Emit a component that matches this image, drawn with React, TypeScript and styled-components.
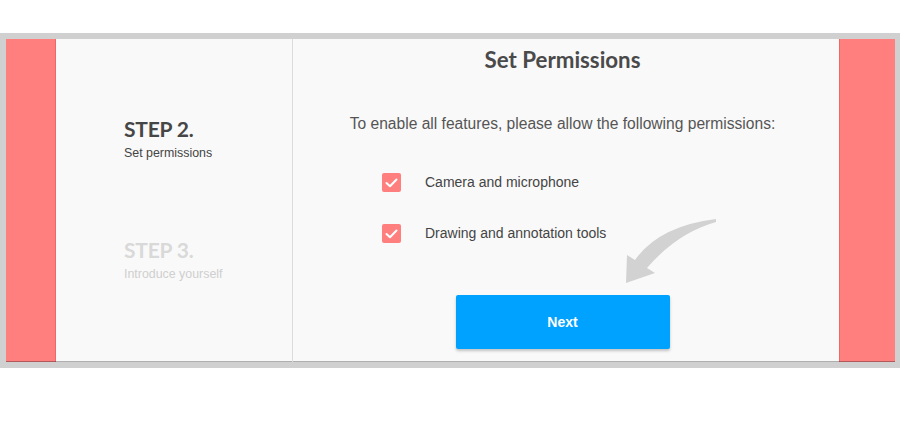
import * as React from "react"
import styled, {createGlobalStyle} from "styled-components"

const GlobalStyle = createGlobalStyle`
  html, body {
    margin: 0;
    padding: 0;
    background: #ffffff;
  }
  body {
    font-family: "Liberation Sans", Arial, sans-serif;
  }
`

const Page = styled.div`
  padding-top: 33px;
  width: 900px;
`

const Frame = styled.div`
  background: #d0d0d0;
  padding: 6px 5px 6px 6px;
`

const Inner = styled.div`
  display: flex;
  height: 323px;
`

const Edge = styled.div<{ $w: number; $side: "left" | "right" }>`
  width: ${p => p.$w}px;
  flex-shrink: 0;
  background: #ff7f7f;
  box-shadow: inset 0 -1px 0 rgba(0, 0, 0, 0.3),
    inset ${p => (p.$side === "left" ? "-1px" : "1px")} 0 0 rgba(180, 40, 40, 0.25);
`

const Sidebar = styled.div`
  width: 237px;
  flex-shrink: 0;
  background: #f9f9f9;
  border-right: 1px solid #dcdcdc;
  box-shadow: inset 0 -1px 0 rgba(0, 0, 0, 0.3);
  padding: 78px 0 0 68px;
  box-sizing: border-box;
`

const Step = styled.div<{ $active?: boolean }>`
  & + & {
    margin-top: 77px;
  }
  h2 {
    margin: 0;
    font-family: Lato, "Open Sans", sans-serif;
    font-weight: 700;
    font-size: 21px;
    line-height: 24px;
    letter-spacing: -0.2px;
    color: ${p => (p.$active ? "#464646" : "#d9d9d9")};
  }
  p {
    margin: 4px 0 0;
    font-size: 12.4px;
    line-height: 16px;
    color: ${p => (p.$active ? "#444444" : "#cfcfcf")};
  }
`

const Main = styled.div`
  position: relative;
  flex: 1;
  background: #f9f9f9;
  box-shadow: inset 0 -1px 0 rgba(0, 0, 0, 0.3);
  display: flex;
  flex-direction: column;
  align-items: center;
  padding: 7px 7px 0 0;
  box-sizing: border-box;
`

const Title = styled.h1`
  margin: 0;
  font-family: Lato, "Open Sans", sans-serif;
  font-weight: 700;
  font-size: 22.3px;
  line-height: 28px;
  color: #4a4a4a;
`

const Intro = styled.p`
  margin: 40px 0 0;
  font-size: 15.6px;
  line-height: 20px;
  color: #555555;
`

const Options = styled.div`
  align-self: flex-start;
  margin: 39px 0 0 89px;
  display: flex;
  flex-direction: column;
  gap: 32px;
`

const Option = styled.label`
  display: flex;
  align-items: center;
  gap: 24px;
  font-size: 14px;
  line-height: 19px;
  color: #444444;
`

const Check = styled.span`
  width: 19px;
  height: 19px;
  border-radius: 2px;
  background: #ff7f7f;
  display: flex;
  align-items: center;
  justify-content: center;
`

const NextButton = styled.button`
  margin-top: 52px;
  width: 214px;
  height: 54px;
  border: none;
  border-radius: 2px;
  background: #00a2ff;
  color: #ffffff;
  font-family: "Liberation Sans", Arial, sans-serif;
  font-weight: 700;
  font-size: 14px;
  box-shadow: 0 2px 3px rgba(0, 0, 0, 0.22);
  cursor: pointer;
`

const Arrow = styled.svg`
  position: absolute;
  left: 326px;
  top: 176px;
`

const permissions = ["Camera and microphone", "Drawing and annotation tools"]

const Tick = () => (
    <svg width="13" height="10" viewBox="0 0 13 10">
        <path d="M1.5 5 L5 8.3 L11.5 1.5" fill="none" stroke="#fff" strokeWidth="2" strokeLinecap="round" strokeLinejoin="round"/>
    </svg>
)

const App: React.FC = () => {
    return (
        <Page>
            <GlobalStyle/>
            <Frame>
                <Inner>
                    <Edge $w={50} $side="left"/>
                    <Sidebar>
                        <Step $active>
                            <h2>STEP 2.</h2>
                            <p>Set permissions</p>
                        </Step>
                        <Step>
                            <h2>STEP 3.</h2>
                            <p>Introduce yourself</p>
                        </Step>
                    </Sidebar>
                    <Main>
                        <Title>Set Permissions</Title>
                        <Intro>To enable all features, please allow the following permissions:</Intro>
                        <Options>
                            {permissions.map(item => (
                                <Option key={item}>
                                    <Check><Tick/></Check>
                                    {item}
                                </Option>
                            ))}
                        </Options>
                        <NextButton>Next</NextButton>
                        <Arrow width="100" height="75" viewBox="0 0 100 75">
                            <path d="M97 4 Q40 11 16 45 L8 40 L7 68 L36 58 L28 53 Q58 18 97 7 Z" fill="#d2d2d2"/>
                        </Arrow>
                    </Main>
                    <Edge $w={56} $side="right"/>
                </Inner>
            </Frame>
        </Page>
    )
}

export default App
